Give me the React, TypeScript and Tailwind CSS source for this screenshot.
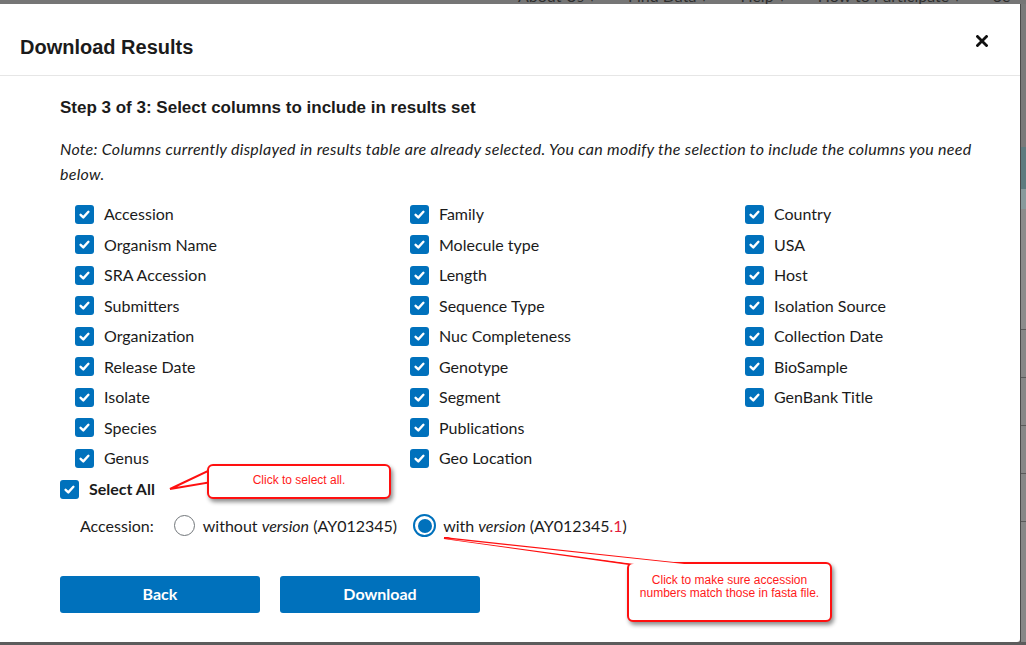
import React from 'react';

const COLUMNS: string[][] = [
  ['Accession', 'Organism Name', 'SRA Accession', 'Submitters', 'Organization', 'Release Date', 'Isolate', 'Species', 'Genus'],
  ['Family', 'Molecule type', 'Length', 'Sequence Type', 'Nuc Completeness', 'Genotype', 'Segment', 'Publications', 'Geo Location'],
  ['Country', 'USA', 'Host', 'Isolation Source', 'Collection Date', 'BioSample', 'GenBank Title'],
];

const SANS = "font-['Lato','Noto_Sans',sans-serif]";

function CheckBox() {
  return (
    <span className="flex h-[19px] w-[19px] shrink-0 items-center justify-center rounded-[3px] bg-[#0071bc]">
      <svg width="13" height="13" viewBox="0 0 13 13" fill="none">
        <path d="M2.6 6.8 L5.3 9.4 L10.4 3.8" stroke="white" strokeWidth="2.4" strokeLinecap="round" strokeLinejoin="round" />
      </svg>
    </span>
  );
}

function CheckRow({ label }: { label: string }) {
  return (
    <div className="flex h-[30.5px] items-center gap-[10px]">
      <CheckBox />
      <span className="text-[16px] text-[#1b1b1b]">{label}</span>
    </div>
  );
}

function Callout({ className, children }: { className: string; children: React.ReactNode }) {
  return (
    <div
      className={`absolute rounded-[6px] border-2 border-[#ff1010] bg-white text-center font-['Liberation_Sans',Arial,sans-serif] text-[12px] leading-[13px] text-[#ff1a1a] shadow-[2px_3px_4px_rgba(0,0,0,0.45)] ${className}`}
    >
      {children}
    </div>
  );
}

export default function App() {
  return (
    <div className={`relative flex h-[645px] w-[1026px] flex-col overflow-hidden bg-[#767676] ${SANS}`}>
      {/* page nav behind the overlay, only its lower edge shows */}
      <div className="h-[4px] shrink-0 overflow-hidden">
        <div className="-mt-[12px] flex gap-[32px] pl-[518px] text-[16px] leading-[16px] text-[#2e2e2e] whitespace-nowrap">
          <span>About Us ▾</span>
          <span>Find Data ▾</span>
          <span>Help ▾</span>
          <span>How to Participate ▾</span>
          <span>Se</span>
        </div>
      </div>

      <div className="flex flex-1">
        {/* modal */}
        <div className="flex h-[638px] w-[1020px] shrink-0 flex-col rounded-br-[3px] bg-white">
          <div className="flex h-[72px] shrink-0 items-start justify-between border-b border-[#e6e6e6] pl-[20px] pr-[32px]">
            <h2 className="mt-[29px] font-['Liberation_Sans',Arial,sans-serif] text-[20px] font-bold leading-[28px] text-[#1b1b1b]">
              Download Results
            </h2>
            <svg width="12" height="12" viewBox="0 0 12 12" className="mt-[31px]">
              <path d="M1.5 1.5 L10.5 10.5 M10.5 1.5 L1.5 10.5" stroke="#111" strokeWidth="2.8" strokeLinecap="square" />
            </svg>
          </div>

          <div className="flex flex-col pl-[60px]">
            <h3 className="mt-[22px] font-['Liberation_Sans',Arial,sans-serif] text-[17px] font-bold leading-[20px] text-[#1b1b1b]">
              Step 3 of 3: Select columns to include in results set
            </h3>
            <p className="mt-[18px] text-[16px] italic leading-[25px] tracking-[0.28px] text-[#1b1b1b]">
              Note: Columns currently displayed in results table are already selected. You can modify the selection to include the columns you need
              <br />
              below.
            </p>

            <div className="mt-[13px] ml-[15px] grid grid-cols-[335px_335px_335px]">
              {COLUMNS.map((col, i) => (
                <div key={i} className="flex flex-col">
                  {col.map((c) => (
                    <CheckRow key={c} label={c} />
                  ))}
                </div>
              ))}
            </div>

            <div className="flex h-[31px] items-center gap-[10px]">
              <CheckBox />
              <span className="text-[16px] font-bold text-[#1b1b1b]">Select All</span>
            </div>

            <div className="mt-[6px] flex h-[30px] items-center pl-[20px] text-[16px] text-[#1b1b1b]">
              <span>Accession:</span>
              <span className="ml-[20px] h-[21px] w-[21px] rounded-full border-[1.5px] border-[#71767a] bg-white" />
              <span className="ml-[8px]">
                without <i>version</i> (AY012345)
              </span>
              <span className="ml-[16px] flex h-[23px] w-[23px] items-center justify-center rounded-full border-[2.5px] border-[#0071bc] bg-white">
                <span className="h-[14px] w-[14px] rounded-full bg-[#0071bc]" />
              </span>
              <span className="ml-[7px]">
                with <i>version</i> (AY012345<span className="text-[#e31c3d]">.1</span>)
              </span>
            </div>

            <div className="mt-[35px] flex gap-[20px]">
              <button className="h-[37px] w-[200px] rounded-[3px] bg-[#0071bc] text-[16px] font-bold text-white">Back</button>
              <button className="h-[37px] w-[200px] rounded-[3px] bg-[#0071bc] text-[16px] font-bold text-white">Download</button>
            </div>
          </div>
        </div>

        {/* page content peeking out on the right */}
        <div className="flex h-[638px] flex-1 flex-col border-l border-[#4a4a4a] bg-[#8a8a8a]">
          <div className="h-[143px] bg-[#7a7a7a]" />
          <div className="h-[42px] bg-[#5e7b7f]" />
          <div className="h-[20px] bg-[#889a9c]" />
          <div className="h-[120px] bg-[#8c8c8c]" />
          <div className="h-[48px] border-t border-[#5a5a5a] bg-[#878787]" />
          <div className="h-[48px] border-t border-[#5a5a5a] bg-[#878787]" />
          <div className="h-[48px] border-t border-[#5a5a5a] bg-[#878787]" />
          <div className="h-[48px] border-t border-[#5a5a5a] bg-[#878787]" />
          <div className="flex-1 border-t border-[#5a5a5a] bg-[#878787]" />
        </div>
      </div>
      <div className="h-[3px] shrink-0 bg-[#5c5c5c]" />

      {/* annotation callouts drawn over the dialog */}
      <svg className="pointer-events-none absolute left-0 top-0" width="1026" height="645">
        <polygon points="170,489 212,469 212,482" fill="white" stroke="#ff1010" strokeWidth="2" strokeLinejoin="miter" />
        <polygon points="444,538 692,565 636,565" fill="white" stroke="#ff1010" strokeWidth="2" strokeLinejoin="miter" />
      </svg>
      <Callout className="left-[207px] top-[464px] h-[35px] w-[184px] pt-[8px]">Click to select all.</Callout>
      <Callout className="left-[627px] top-[562px] h-[60px] w-[205px] pt-[10px]">
        Click to make sure accession
        <br />
        numbers match those in fasta file.
      </Callout>
      <svg className="pointer-events-none absolute left-0 top-0" width="1026" height="645">
        <polygon points="445,538.5 689,564.5 638,564.5" fill="white" />
      </svg>
    </div>
  );
}
